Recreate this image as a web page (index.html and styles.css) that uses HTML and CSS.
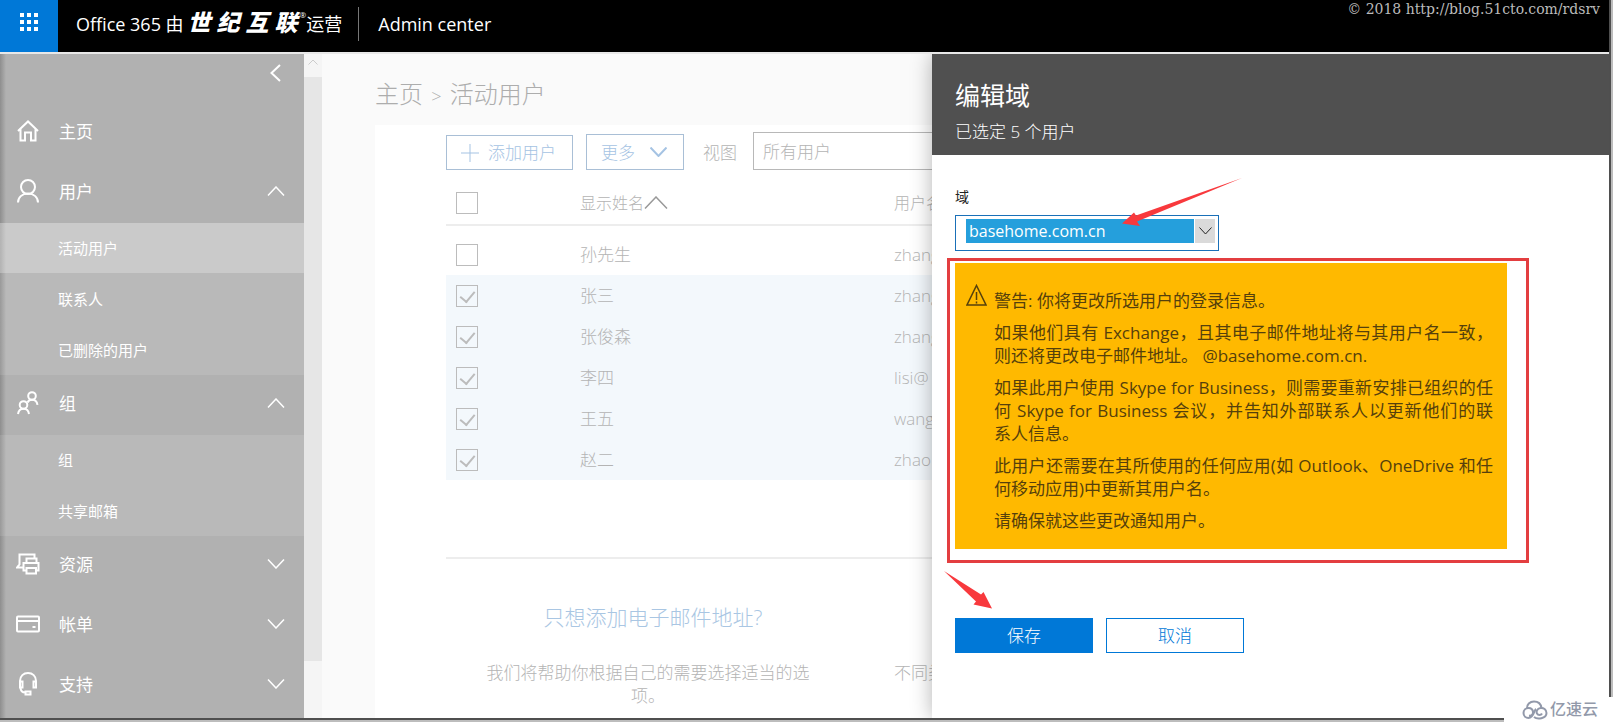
FILE: index.html
```html
<!DOCTYPE html>
<html lang="zh-CN">
<head>
<meta charset="utf-8">
<title>Admin center</title>
<link rel="stylesheet" href="styles.css">
</head>
<body>
<div class="frame">
  <header class="topbar">
    <button class="launcher" aria-label="应用启动器">
      <svg width="18" height="18" viewBox="0 0 18 18"><path d="M0 0h4v4H0zM7 0h4v4H7zM14 0h4v4h-4zM0 7h4v4H0zM7 7h4v4H7zM14 7h4v4h-4zM0 14h4v4H0zM7 14h4v4H7zM14 14h4v4h-4z"/></svg>
    </button>
    <div class="brand"><span>Office 365 由</span><span class="brand-logo"><span>世</span><span>纪</span><span>互</span><span>联</span></span><sup class="brand-reg">®</sup><span>运营</span></div>
    <div class="product">Admin center</div>
    <div class="copyright">© 2018 http://blog.51cto.com/rdsrv</div>
  </header>

  <div class="body">
    <nav class="sidebar">
      <button class="collapse" aria-label="折叠"><svg width="11" height="18" viewBox="0 0 11 18"><path d="M10 1 1.500 9 10 17"/></svg></button>
      <a class="item" href="#"><svg width="22" height="22" viewBox="0 0 22 22"><path d="M1 11 11 1.500 21 11M3.500 9v11.500h4.500v-8h6v8h4.500V9"/></svg><span>主页</span></a>
      <a class="item" href="#"><svg width="22" height="24" viewBox="0 0 22 24"><circle cx="11" cy="8" r="7"/><path d="M1 23.500c0-5 4-9 10-9s10 4 10 9"/></svg><span>用户</span><svg class="chev" width="18" height="10" viewBox="0 0 18 10"><path d="M1 9.500 9 1l8 8.500"/></svg></a>
      <ul class="sub">
        <li><a class="active" href="#">活动用户</a></li>
        <li><a href="#">联系人</a></li>
        <li><a href="#">已删除的用户</a></li>
      </ul>
      <a class="item" href="#"><svg width="22" height="24" viewBox="0 0 22 24"><circle cx="15" cy="5" r="3.800"/><path d="M10.500 11.500c1-2 2.500-2.700 4.500-2.700 3 0 5 2 5.500 5"/><circle cx="6.500" cy="14" r="3.800"/><path d="M1 23c.5-3.500 2.500-5.200 5.500-5.200S11.500 19.500 12 23"/></svg><span>组</span><svg class="chev" width="18" height="10" viewBox="0 0 18 10"><path d="M1 9.500 9 1l8 8.500"/></svg></a>
      <ul class="sub">
        <li><a href="#">组</a></li>
        <li><a href="#">共享邮箱</a></li>
      </ul>
      <a class="item" href="#"><svg width="24" height="22" viewBox="0 0 24 22"><path d="M18.500 5V1.500H3.500v10L1 14.500h6M10.500 10V5.500h10V10M10 17.500H7.500V10h15v7.500H20M10.500 15h9.500v5.500h-9.500z"/></svg><span>资源</span><svg class="chev" width="18" height="10" viewBox="0 0 18 10"><path d="M1 .5 9 9l8-8.500"/></svg></a>
      <a class="item" href="#"><svg width="24" height="18" viewBox="0 0 24 18"><rect x="1" y="1.500" width="22" height="15" rx="1"/><path d="M1 6h22M16.500 12h3"/></svg><span>帐单</span><svg class="chev" width="18" height="10" viewBox="0 0 18 10"><path d="M1 .5 9 9l8-8.500"/></svg></a>
      <a class="item" href="#"><svg width="22" height="24" viewBox="0 0 22 24"><path d="M3 9c0-5 3.500-8 8-8s8 3 8 8M5.500 9.500H3v6h2.500zM19 9.500h-2.500v6H19zM3.500 15.500c0 3 2 5 5 5M8.500 19.500h5v3h-5z"/></svg><span>支持</span><svg class="chev" width="18" height="10" viewBox="0 0 18 10"><path d="M1 .5 9 9l8-8.500"/></svg></a>
    </nav>
    <div class="scroll"><svg width="18" height="23" viewBox="0 0 18 23"><path d="M4.500 10.500 9 6l4.500 4.500"/></svg><div class="thumb"></div></div>

    <main class="main">
      <h1 class="crumb">主页 <span class="sep">&gt;</span> 活动用户</h1>
      <section class="card">
        <div class="toolbar">
          <button class="tool add"><svg width="18" height="18" viewBox="0 0 18 18"><path d="M9 0v18M0 9h18"/></svg>添加用户</button>
          <button class="tool more">更多<svg width="17" height="10" viewBox="0 0 17 10"><path d="m.5.500 8 8.500 8-8.500"/></svg></button>
          <label class="view-label" for="view">视图</label>
          <select class="view" id="view"><option>所有用户</option></select>
        </div>
        <table class="users">
          <colgroup><col class="c-check"><col class="c-name"><col></colgroup>
          <thead><tr><th><input type="checkbox" aria-label="全选"></th><th>显示姓名<svg width="24" height="13" viewBox="0 0 24 13"><path d="M1 12.500 12 1l11 11.500"/></svg></th><th>用户名</th></tr></thead>
          <tbody>
            <tr class="gap"><td colspan="3"></td></tr>
            <tr><td><input type="checkbox" aria-label="孙先生"></td><td>孙先生</td><td>zhang</td></tr>
            <tr class="on"><td><input type="checkbox" checked aria-label="张三"></td><td>张三</td><td>zhang</td></tr>
            <tr class="on"><td><input type="checkbox" checked aria-label="张俊森"></td><td>张俊森</td><td>zhang</td></tr>
            <tr class="on"><td><input type="checkbox" checked aria-label="李四"></td><td>李四</td><td>lisi@</td></tr>
            <tr class="on"><td><input type="checkbox" checked aria-label="王五"></td><td>王五</td><td>wang</td></tr>
            <tr class="on"><td><input type="checkbox" checked aria-label="赵二"></td><td>赵二</td><td>zhao</td></tr>
          </tbody>
        </table>
        <div class="tips">
          <div class="tip"><h2><a href="#">只想添加电子邮件地址?</a></h2><p>我们将帮助你根据自己的需要选择适当的选项。</p></div>
          <div class="tip side"><p>不同类</p></div>
        </div>
      </section>
    </main>

    <aside class="panel">
      <div class="panel-head"><h2>编辑域</h2><p>已选定 5 个用户</p></div>
      <form class="panel-body">
        <label class="domain-label" for="domain">域</label>
        <div class="domain"><select id="domain"><option>basehome.com.cn</option></select><span class="drop"><svg width="13" height="8" viewBox="0 0 13 8"><path d="m.5.500 6 6.500 6-6.500"/></svg></span></div>
        <div class="callout">
          <div class="warning">
            <svg width="21" height="22" viewBox="0 0 21 22"><path d="M10.500 1.500 20 21H1zM10.500 8v8M10.500 17.500v2"/></svg>
            <div class="warning-text">
              <p>警告: 你将更改所选用户的登录信息。</p>
              <p>如果他们具有 Exchange，且其电子邮件地址将与其用户名一致，则还将更改电子邮件地址。 @basehome.com.cn.</p>
              <p>如果此用户使用 Skype for Business，则需要重新安排已组织的任何 Skype for Business 会议，并告知外部联系人以更新他们的联<span class="keep">系人信息。</span></p>
              <p>此用户还需要在其所使用的任何应用(如 Outlook、OneDrive 和任何移动应用)中更新其用户名。</p>
              <p>请确保就这些更改通知用户。</p>
            </div>
          </div>
        </div>
        <div class="actions"><button type="button" class="save">保存</button><button type="button" class="cancel">取消</button></div>
      </form>
      <svg class="arrow arrow-domain" width="120" height="49" viewBox="0 0 120 49"><path d="M120 0 14 37.500 12 34.500 0 45.500l18 2.500-3-4.500z"/></svg>
      <svg class="arrow arrow-save" width="48" height="38" viewBox="0 0 48 38"><path d="M0 0 37 23.500 39.500 21 48 37.500 29.500 33.500 32 30.500z"/></svg>
    </aside>
  </div>
</div>
<div class="watermark"><svg width="26" height="20" viewBox="0 0 26 20"><path d="M5 8.500C4.500 4.500 8 1.500 12 1.500c4.500 0 7 3 7.500 6.500"/><path d="M14 9c-2 1-2 9-7.500 9A5 5 0 0 1 6.500 8c3 0 4.500 2 4.500 4.500S9 16 7 15.500"/><path d="M12 17c3 2.500 12.500 2 12.500-4 0-3.500-3-5.500-6-5-3.500.5-4.500 3.500-3.500 5.500s4 2 5 0"/></svg><span>亿速云</span></div>
</body>
</html>
```

FILE: styles.css
```css
* { box-sizing: border-box; }
body {
  margin: 0;
  background: #bdbdbd;
  font-family: "Open Sans", "Noto Sans CJK SC", sans-serif;
  font-size: 17px;
  font-weight: 300;
  line-height: 23px;
  color: #b4b4b4;
}
h1, h2, p, ul { margin: 0; padding: 0; font-weight: inherit; }
button, select { font: inherit; color: inherit; }
a { color: inherit; text-decoration: none; }
svg { fill: none; stroke: currentColor; flex: none; }

.frame {
  display: flex;
  flex-direction: column;
  height: calc(100vh - 2px);
  margin-right: 2px;
  border: solid #4f4f4f;
  border-width: 0 2px 2px 0;
}

.topbar {
  display: flex;
  flex: none;
  height: 54px;
  background: #000;
  border-bottom: 2px solid #e8e8e8;
  color: #fff;
  font-size: 18px;
  font-weight: 400;
}
.launcher { width: 58px; padding: 0 0 8px; border: 0; background: #0078d7; }
.launcher svg { display: block; margin: 0 auto; fill: #fff; stroke: none; }
.brand {
  display: flex;
  align-items: center;
  height: 34px;
  margin: 7px 0 0 18px;
  padding-right: 16px;
  border-right: 1px solid #777;
}
.brand-logo { display: flex; gap: 6px; margin: 0 2px 3px 4px; font-size: 23px; font-weight: 900; font-style: italic; }
.brand-reg { align-self: flex-start; font-size: 8px; line-height: 16px; }
.product { margin: 13px 0 0 19px; }
.copyright {
  margin: 0 9px 0 auto;
  color: #bbb;
  font: 14px/18px "DejaVu Serif", serif;
}

.body { position: relative; display: flex; flex: 1; min-height: 0; overflow: hidden; }

.sidebar {
  flex: none;
  width: 304px;
  overflow: hidden;
  background: linear-gradient(to right, #8e8e8e, rgba(177, 177, 177, 0) 6px) #b1b1b1;
  color: #fff;
  font-weight: 400;
}
.sidebar svg { stroke-width: 2; }
.collapse { display: block; height: 49px; margin-left: auto; padding: 10px 23px 21px; border: 0; background: none; }
.collapse svg { display: block; }
.item { display: flex; align-items: center; height: 60px; padding: 0 19px 4px 16px; }
.item svg:first-child { width: 24px; margin-right: 19px; }
.item .chev { margin-left: auto; stroke-width: 1.5; }
.sub { display: grid; gap: 1px; list-style: none; background: rgba(255, 255, 255, .1); font-size: 15px; }
.sub a { display: block; padding: 14px 0 13px 58px; }
.sub .active { background: rgba(255, 255, 255, .25); }

.scroll { flex: none; width: 18px; background: #f5f5f5; color: #ccc; }
.scroll svg { display: block; }
.thumb { height: 88%; background: #e6e6e6; }

.main { flex: 1; min-width: 0; padding-left: 53px; background: #fafafa; }
.crumb { padding: 23px 0 14px; font-size: 24px; line-height: 34px; color: #adadad; }
.sep { margin: 0 2px; font-size: 18px; }
.card { height: 100%; padding: 7px 0 0 71px; background: #fff; }
.toolbar { display: flex; align-items: flex-end; height: 38px; }
.tool { display: flex; align-items: center; border: 1px solid #a9bfd6; background: none; color: #a5c3e3; }
.add { width: 127px; height: 35px; padding: 0 14px; gap: 9px; }
.more { width: 98px; height: 36px; margin-left: 13px; padding: 0 14px; gap: 15px; }
.more svg { stroke-width: 2; }
.view-label { margin: 0 16px 6px 19px; }
.view { appearance: none; flex: 1; height: 38px; padding: 0 9px; border: 1px solid #b8b8b8; border-radius: 0; background: #fff; }
.main .crumb { margin-bottom: -2px; }

.users { width: 100%; table-layout: fixed; border-collapse: collapse; }
.c-check { width: 134px; }
.c-name { width: 314px; }
.users th { height: 55px; padding: 12px 0 0; border-bottom: 2px solid #ededed; font-size: 16px; font-weight: inherit; text-align: left; }
.users th:first-child, .users td:first-child { padding-left: 10px; }
.users th svg { stroke: #999; stroke-width: 1.5; }
.users td { height: 41px; padding: 0; }
.users .gap td { height: 9px; }
.on { background: #f3f8fc; }
.users input {
  appearance: none;
  display: block;
  width: 22px;
  height: 22px;
  margin: 0;
  border: 1px solid #bcbcbc;
}
.users input:checked::before {
  content: "";
  display: block;
  width: 7px;
  height: 12px;
  margin: 2px auto;
  border: solid #bcbcbc;
  border-width: 0 2px 2px 0;
  transform: rotate(40deg);
}

.tips { display: flex; margin-top: 77px; border-top: 2px solid #ededed; }
.tip { flex: none; width: 404px; padding: 44px 36px 0; text-align: center; }
.tip h2 { margin-bottom: 30px; padding-left: 10px; font-size: 21px; line-height: 28px; color: #a9c6e3; }
.tip.side { padding: 102px 0 0 44px; text-align: left; }

.panel {
  position: absolute;
  inset: 0 0 0 auto;
  width: 677px;
  background: #fff;
  box-shadow: 0 0 20px rgba(0, 0, 0, .3);
  color: #222;
}
.panel-head { height: 101px; padding: 23px 23px 0; background: #505050; color: #fff; }
.panel-head h2 { font-size: 25px; font-weight: 400; line-height: 36px; }
.panel-head p { margin-top: 7px; }
.panel-body { padding: 30px 80px 0 15px; }
.domain-label { display: block; margin-left: 8px; font-size: 14px; font-weight: 400; line-height: 24px; }
.domain { display: flex; width: 264px; height: 36px; margin: 6px 0 0 8px; padding: 3px 3px 7px 10px; gap: 1px; border: 1px solid #1a70b8; }
.domain select { appearance: none; flex: 1; padding: 0 3px; border: 0; border-radius: 0; background: #259fdc; color: #fff; font-size: 16px; font-weight: 400; line-height: 23px; }
.drop { display: flex; align-items: center; justify-content: center; width: 20px; background: #dadada; }
.callout { margin-top: 7px; padding: 2px 19px 11px 5px; border: 3px solid #e33e40; }
.warning { display: flex; gap: 7px; padding: 21px 14px 17px 11px; background: #ffb900; color: #55400c; font-weight: 400; }
.warning > svg { stroke-width: 1.5; }
.warning-text { display: grid; flex: 1; gap: 9px; padding-top: 5px; text-align: justify; text-justify: inter-word; }
.keep { white-space: nowrap; }
.actions { display: flex; gap: 13px; margin: 55px 0 0 8px; }
.actions button { width: 138px; height: 35px; padding: 0; border: 1px solid #0078d7; }
.save { background: #0078d7; color: #fff; }
.cancel { background: #fff; color: #0078d7; }
.arrow { position: absolute; fill: #f8393d; stroke: none; }
.arrow-domain { left: 190px; top: 124px; }
.arrow-save { left: 12px; top: 517px; }

.watermark {
  position: absolute;
  right: 0;
  bottom: 0;
  display: flex;
  align-items: center;
  gap: 2px;
  width: 109px;
  height: 25px;
  padding-left: 18px;
  background: #fff;
  color: #9299aa;
  font-size: 16px;
  font-weight: 500;
}
.watermark svg { stroke-width: 2; }
```
